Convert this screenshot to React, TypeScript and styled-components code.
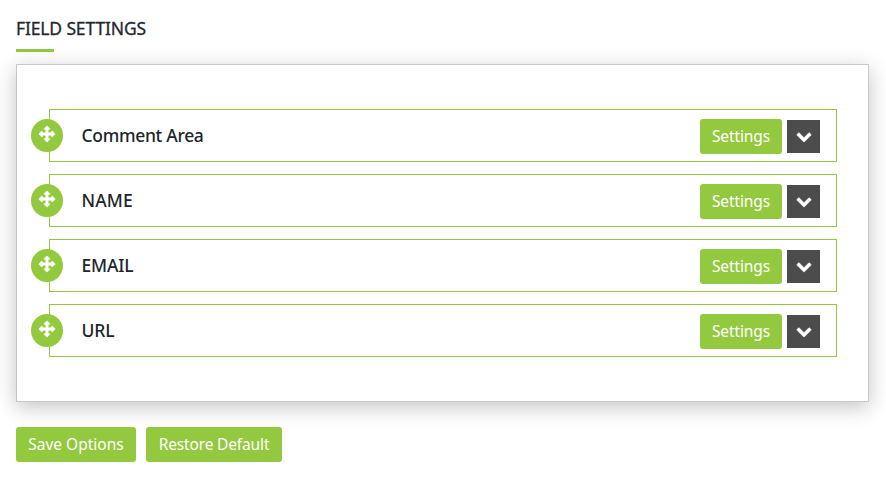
import React from "react";
import styled, { createGlobalStyle } from "styled-components";

const GlobalStyle = createGlobalStyle`
  * { box-sizing: border-box; }
  body {
    margin: 0;
    background: #fff;
    font-family: "Segoe UI", "Noto Sans", "Open Sans", sans-serif;
    color: #212529;
  }
`;

const Page = styled.main`
  display: flex;
  flex-direction: column;
  padding: 16px 17px 20px 16px;
`;

const Title = styled.h1`
  margin: 0;
  height: 33px;
  font-size: 17.5px;
  line-height: 25px;
  font-weight: 400;
  letter-spacing: -0.14px;
  color: #23282d;
  -webkit-text-stroke: 0.3px;
`;

const Underline = styled.div`
  width: 38px;
  height: 3px;
  background: #93c93e;
`;

const Panel = styled.section`
  margin-top: 12px;
  height: 338px;
  padding: 44px 31px 0 32px;
  border: 1px solid #c8c8c8;
  background: #fff;
  box-shadow: 0 5px 20px rgba(0, 0, 0, 0.24);
`;

const FieldList = styled.ul`
  display: flex;
  flex-direction: column;
  gap: 12px;
  margin: 0;
  padding: 0;
  list-style: none;
`;

const FieldRow = styled.li`
  display: flex;
  align-items: flex-start;
  height: 53px;
  padding: 9px 16px 0 0;
  border: 1px solid #93c93e;
`;

const Handle = styled.span`
  display: flex;
  justify-content: center;
  width: 32px;
  height: 33px;
  margin-left: -19px;
  padding-top: 7px;
  border-radius: 50%;
  background: #93c93e;
  color: #fff;
`;

const FieldName = styled.span<{ $spacing: number }>`
  flex: 1;
  margin-left: 18.5px;
  font-size: 17.5px;
  line-height: 32px;
  font-weight: 500;
  letter-spacing: ${(p) => p.$spacing}px;
`;

const Button = styled.button<{ $width: number; $spacing?: number }>`
  width: ${(p) => p.$width}px;
  height: 35px;
  padding: 0;
  border: 0;
  border-radius: 3px;
  background: #93c93e;
  color: #fff;
  font-family: inherit;
  font-size: 15.5px;
  line-height: 35px;
  letter-spacing: ${(p) => p.$spacing ?? 0}px;
  white-space: nowrap;
`;

const Toggle = styled.button`
  display: flex;
  align-items: center;
  justify-content: center;
  width: 33px;
  height: 33px;
  margin: 1px 0 0 5px;
  padding: 0 0 1px;
  border: 0;
  background: #4c4c4c;
  color: #fff;
`;

const Actions = styled.div`
  display: flex;
  gap: 10px;
  margin-top: 25px;
`;

const Icon = styled.svg`
  display: block;
  overflow: visible;
  fill: currentColor;
  stroke: currentColor;
  stroke-linejoin: round;
`;

const MoveIcon = () => (
  <Icon width="16" height="16" viewBox="0 0 1792 1792" strokeWidth="70">
    <path d="M1792 896q0 26-19 45l-256 256q-19 19-45 19t-45-19-19-45v-128h-384v384h128q26 0 45 19t19 45-19 45l-256 256q-19 19-45 19t-45-19l-256-256q-19-19-19-45t19-45 45-19h128v-384h-384v128q0 26-19 45t-45 19-45-19l-256-256q-19-19-19-45t19-45l256-256q19-19 45-19t45 19 19 45v128h384v-384h-128q-26 0-45-19t-19-45 19-45l256-256q19-19 45-19t45 19l256 256q19 19 19 45t-19 45-45 19h-128v384h384v-128q0-26 19-45t45-19 45 19l256 256q19 19 19 45z" />
  </Icon>
);

const ChevronIcon = () => (
  <Icon width="16" height="16" viewBox="0 0 1792 1792" strokeWidth="60">
    <path d="M1683 808l-742 741q-19 19-45 19t-45-19l-742-741q-19-19-19-45.5t19-45.5l166-165q19-19 45-19t45 19l531 531 531-531q19-19 45-19t45 19l166 165q19 19 19 45.5t-19 45.5z" />
  </Icon>
);

const fields = [
  { name: "Comment Area", spacing: -0.31 },
  { name: "NAME", spacing: 0.1 },
  { name: "EMAIL", spacing: -0.15 },
  { name: "URL", spacing: -0.15 },
];

export default function App() {
  return (
    <>
      <GlobalStyle />
      <Page>
        <Title>FIELD SETTINGS</Title>
        <Underline />
        <Panel>
          <FieldList>
            {fields.map((field) => (
              <FieldRow key={field.name}>
                <Handle>
                  <MoveIcon />
                </Handle>
                <FieldName $spacing={field.spacing}>{field.name}</FieldName>
                <Button $width={82} $spacing={-0.1}>Settings</Button>
                <Toggle aria-label={`Expand ${field.name}`}>
                  <ChevronIcon />
                </Toggle>
              </FieldRow>
            ))}
          </FieldList>
        </Panel>
        <Actions>
          <Button $width={120}>Save Options</Button>
          <Button $width={136} $spacing={-0.15}>Restore Default</Button>
        </Actions>
      </Page>
    </>
  );
}
